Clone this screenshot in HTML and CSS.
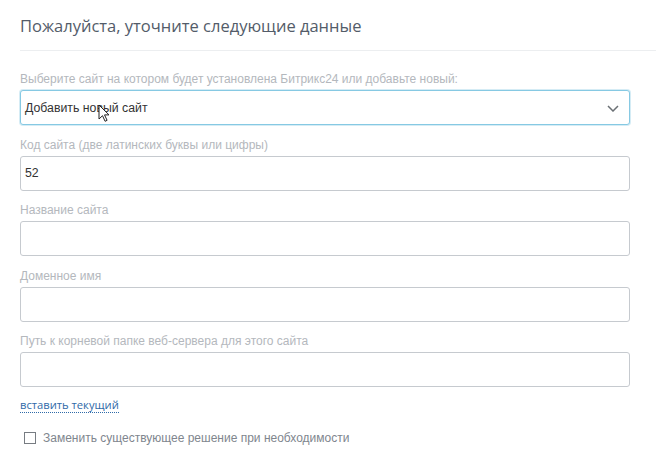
FILE: index.html
```html
<!DOCTYPE html>
<html lang="ru">
<head>
<meta charset="utf-8">
<link rel="stylesheet" href="styles.css">
</head>
<body>
<div class="page">
  <h1 class="title">Пожалуйста, уточните следующие данные</h1>
  <div class="divider"></div>
  <form class="form">
    <div class="field">
      <label class="label">Выберите сайт на котором будет установлена Битрикс24 или добавьте новый:</label>
      <div class="control select">
        <span class="value">Добавить новый сайт</span>
        <svg class="chevron" width="12" height="7" viewBox="0 0 12 7"><path d="M1 1l5 5 5-5" fill="none" stroke="#6b7075" stroke-width="1.5"/></svg>
        <svg class="cursor" width="13" height="18" viewBox="0 0 13 18"><path d="M1 1v14l3.5-3.3 2.6 5.6 2-1-2.6-5.4H11z" fill="#fff" stroke="#222" stroke-width="1" stroke-linejoin="round"/></svg>
      </div>
    </div>
    <div class="field">
      <label class="label">Код сайта (две латинских буквы или цифры)</label>
      <div class="control"><span class="value">52</span></div>
    </div>
    <div class="field">
      <label class="label">Название сайта</label>
      <div class="control"></div>
    </div>
    <div class="field">
      <label class="label">Доменное имя</label>
      <div class="control"></div>
    </div>
    <div class="field">
      <label class="label">Путь к корневой папке веб-сервера для этого сайта</label>
      <div class="control"></div>
    </div>
    <a class="link">вставить текущий</a>
    <div class="check">
      <span class="box"></span>
      <span class="check-label">Заменить существующее решение при необходимости</span>
    </div>
  </form>
</div>
</body>
</html>
```

FILE: styles.css
```css
html, body {
  margin: 0;
  padding: 0;
  background: #fff;
}
.page {
  padding: 0 0 0 20px;
  font-family: "Liberation Sans", Arial, sans-serif;
}
.title {
  margin: 0;
  padding-top: 15px;
  height: 35px;
  box-sizing: border-box;
  font-family: "Open Sans", sans-serif;
  font-weight: 400;
  font-size: 16.5px;
  line-height: 21px;
  color: #535c69;
}
.divider {
  height: 1px;
  background: #eceef0;
  margin-top: 15px;
}
.form {
  width: 610px;
  padding-top: 21px;
}
.field {
  margin-bottom: 12.6px;
}
.label {
  display: block;
  font-size: 12px;
  line-height: 14px;
  color: #b4b8bd;
  margin-bottom: 4px;
}
.control {
  position: relative;
  height: 35px;
  box-sizing: border-box;
  border: 1px solid #c6cacf;
  border-radius: 3px;
  display: flex;
  align-items: center;
  padding-left: 4px;
  background: #fff;
}
.select {
  border-color: #86c9e3;
  box-shadow: 0 0 0 1px rgba(134, 201, 227, 0.35);
}
.value {
  font-size: 12.3px;
  color: #333;
}
.chevron {
  position: absolute;
  right: 10px;
  top: 14px;
}
.cursor {
  position: absolute;
  left: 77px;
  top: 13px;
}
.link {
  display: block;
  width: fit-content;
  margin-top: -3px;
  font-family: "Open Sans", sans-serif;
  font-size: 11.2px;
  line-height: 15px;
  color: #2f6aa8;
  border-bottom: 1px dotted #2f6aa8;
  cursor: pointer;
}
.check {
  display: flex;
  align-items: center;
  margin-top: 18px;
  padding-left: 4px;
  line-height: 14px;
}
.box {
  width: 10px;
  height: 10px;
  border: 1px solid #777c82;
  background: #fff;
  margin-right: 7px;
}
.check-label {
  font-size: 12px;
  color: #80868e;
}
```
